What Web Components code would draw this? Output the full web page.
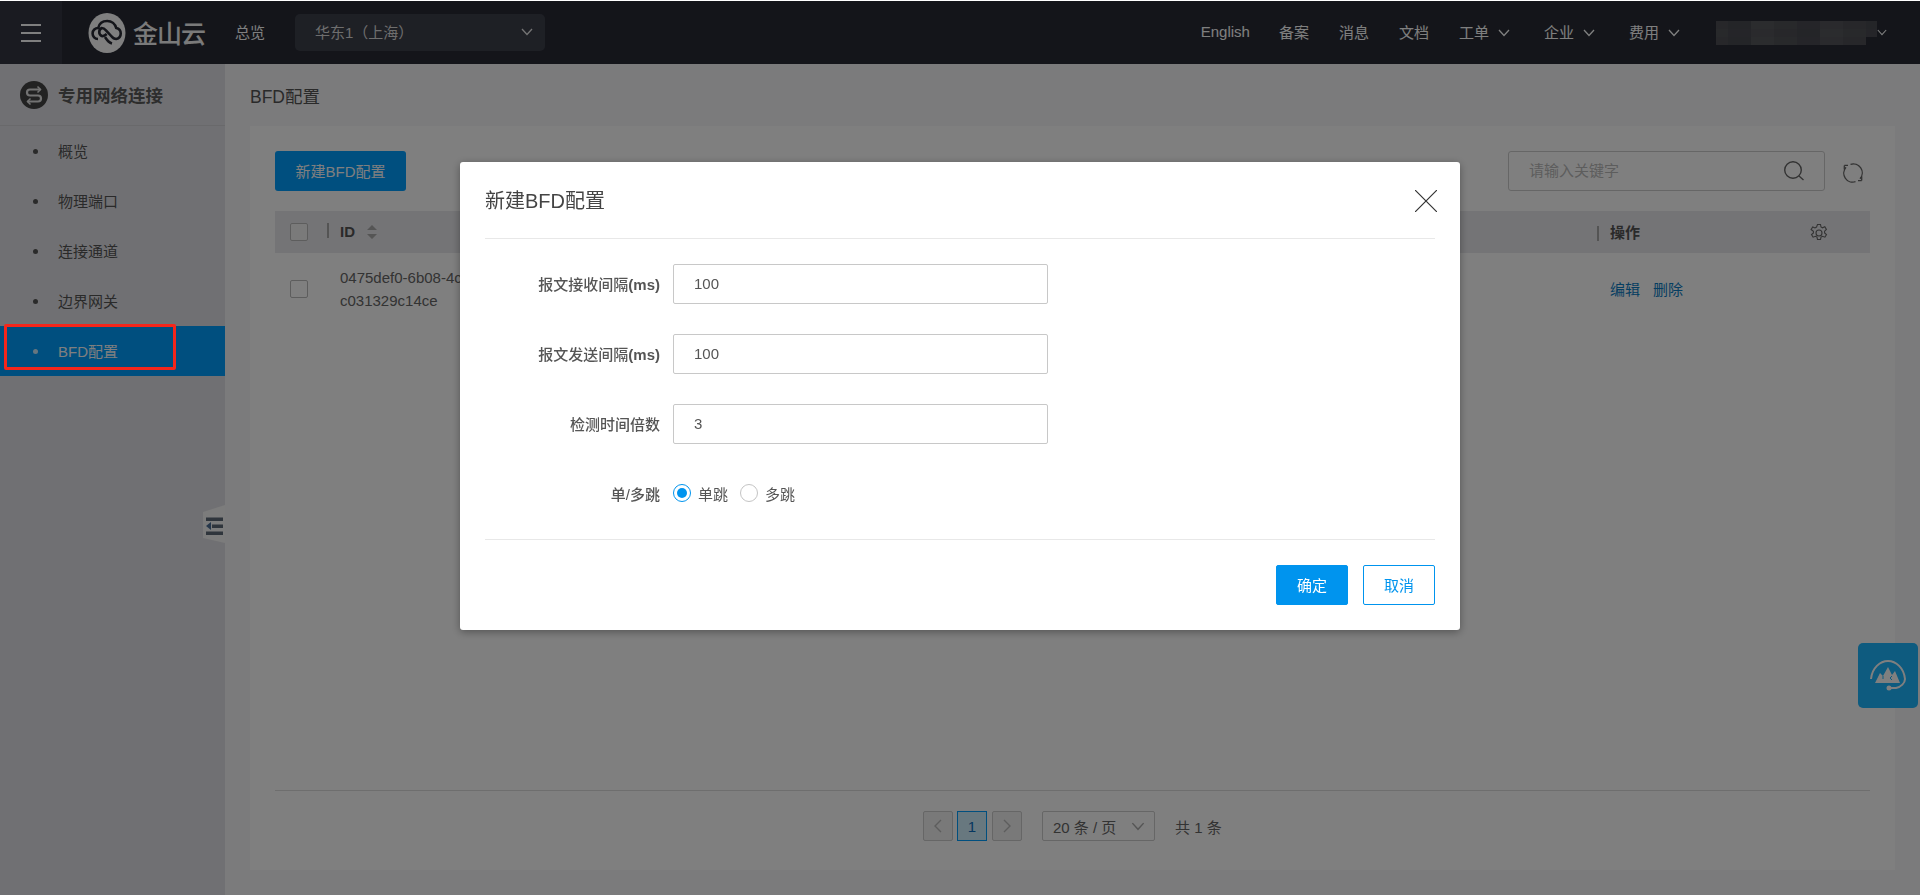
<!DOCTYPE html>
<html lang="zh-CN"><head><meta charset="utf-8"><title>BFD配置</title>
<style>
html,body{margin:0;height:100%;overflow:hidden}
body{padding-top:1px;box-sizing:border-box;background:#fff;font-family:"Liberation Sans","Noto Sans CJK SC",sans-serif;font-size:15px;color:#444}
</style></head><body>
<ks-shell>
  <ks-header slot="header"></ks-header>
  <ks-sidebar slot="side">
    <ks-nav>概览</ks-nav><ks-nav>物理端口</ks-nav><ks-nav>连接通道</ks-nav><ks-nav>边界网关</ks-nav><ks-nav active>BFD配置</ks-nav>
  </ks-sidebar>
  <ks-page slot="main"></ks-page>
</ks-shell>
<ks-support></ks-support>
<ks-overlay>
  <ks-modal heading="新建BFD配置">
    <ks-field label="报文接收间隔&lt;b&gt;(ms)&lt;/b&gt;" value="100"></ks-field>
    <ks-field label="报文发送间隔&lt;b&gt;(ms)&lt;/b&gt;" value="100"></ks-field>
    <ks-field label="检测时间倍数" value="3"></ks-field>
    <ks-radios label="单/多跳"></ks-radios>
  </ks-modal>
</ks-overlay>
<ks-mark></ks-mark>
<script>
const chev=(c,s=12)=>`<svg width="${s}" height="${Math.round(s*.6)+1}" viewBox="0 0 12 8" fill="none" stroke="${c}" stroke-width="1.3"><path d="M1 1l5 5.5L11 1"/></svg>`;
function def(name,html){
  customElements.define(name,class extends HTMLElement{
    constructor(){super();this.attachShadow({mode:'open'});}
    connectedCallback(){
      const a=k=>this.getAttribute(k)||'';
      this.shadowRoot.innerHTML=typeof html==='function'?html(a,this):html;
    }
  });
}
def('ks-shell',`<style>:host{display:flex;flex-direction:column;height:894px}
.row{display:flex;flex:1;min-height:0}</style>
<slot name="header"></slot><div class="row"><slot name="side"></slot><slot name="main"></slot></div>`);

let mosaic='';
const shades=['#4e4f55','#54555a','#4a4b52','#515257','#57585c','#484a50'];
for(let r=0;r<3;r++)for(let c=0;c<14;c++){
  if(r===2&&c>12)continue;
  const sh=shades[(c*5+r*3+(c>>1))%6];
  mosaic+=`<rect x="${c*11.5}" y="${r*8}" width="11.6" height="8.2" fill="${sh}"/>`;
}
def('ks-header',`<style>
:host{display:flex;align-items:center;height:63px;background:#282b35;color:#fff;font-size:15px;flex:none}
.burger{width:62px;height:63px;background:#343742;display:flex;flex-direction:column;gap:6px;align-items:center;justify-content:center}
.burger i{display:block;width:20px;height:2px;background:#fff}
.logo{margin-left:26px;display:flex;align-items:center;gap:7px;width:117px}
.logo b{font:500 25px/1 "Noto Sans CJK SC",sans-serif;letter-spacing:-1px;white-space:nowrap;color:#f4f4f4}
.ov{margin-left:30px;padding-bottom:2px}
.sel{margin-left:30px;width:250px;height:37px;box-sizing:border-box;padding:0 12px 0 20px;background:#3d404b;border-radius:5px;display:flex;align-items:center;justify-content:space-between;color:#dcdcdc;margin-top:-1px}
.sel span{padding-bottom:2px}
.r{margin-left:auto;display:flex;align-items:center;padding-right:33px}
.r span{white-space:nowrap;padding-bottom:3px}
.e{margin-right:29px}.n{margin-right:30px}.d{margin-left:9px;margin-right:34px;display:flex}
.blur{display:flex;align-items:center}
</style>
<div class="burger"><i></i><i></i><i></i></div>
<div class="logo"><svg width="38" height="40" viewBox="0 0 38 40"><ellipse cx="19" cy="20" rx="18.500" ry="20" fill="#fff"/><path d="M10 26a5.500 5.500 0 0 1 .2-11c1-4.500 4.500-7 9-7 4.600 0 8 3 9 7a5.600 5.600 0 0 1 0 11c-2 0-3.500-1-5-3l-5-5.500c-1.500-1.700-3-2.500-4.500-2.500a4.500 4.500 0 0 0 0 8c2 .5 3.500-.5 5-2" fill="none" stroke="#282b35" stroke-width="2.600"/><path d="M17 24c2 3 3.500 5.500 7 6.500" fill="none" stroke="#282b35" stroke-width="2.600"/></svg><b>金山云</b></div>
<span class="ov">总览</span>
<div class="sel"><span>华东1（上海）</span>${chev('#e8e8e8')}</div>
<div class="r"><span class="e">English</span><span class="n">备案</span><span class="n">消息</span><span class="n">文档</span><span>工单</span><div class="d">${chev('#fff')}</div><span>企业</span><div class="d">${chev('#fff')}</div><span>费用</span><div class="d" style="margin-right:36px">${chev('#fff')}</div>
<div class="blur"><svg width="161" height="24" viewBox="0 0 161 24" shape-rendering="crispEdges">${mosaic}</svg></div>
<div style="display:flex">${chev('#fff',10)}</div></div>`);

def('ks-sidebar',`<style>
:host{display:block;width:225px;flex:none;background:#e1e1e6;position:relative}
.h{height:61px;border-bottom:1px solid #d2d2d6;display:flex;align-items:center;padding-left:20px;gap:10px;font:700 17.500px "Noto Sans CJK SC",sans-serif;color:#5a5a5a}
.handle{position:absolute;left:203px;top:441px}
</style>
<div class="h"><svg width="28" height="28" viewBox="0 0 28 28"><circle cx="14" cy="14" r="14" fill="#444"/><path d="M20.500 8.500H10a3 3 0 0 0 0 6h8a3 3 0 0 1 0 6H7.500" fill="none" stroke="#e4e4e4" stroke-width="2.200"/><path d="M17.500 5.500l3 3-3 3M10.500 17.500l-3 3 3 3" fill="none" stroke="#e4e4e4" stroke-width="1.500"/></svg><span>专用网络连接</span></div>
<slot></slot>
<svg class="handle" width="22" height="38" viewBox="0 0 22 38"><path d="M0 7L22 0V38L0 33Z" fill="#f8f8f8"/><path d="M3 12.500h17v3.500H3zM9 19.500h11v3.500H9zM3 26.500h17v3.500H3z" fill="#5e6a78"/><path d="M8 17v8l-5-4z" fill="#4c6f96"/></svg>`);

def('ks-nav',(a,el)=>`<style>
:host{display:flex;align-items:center;height:50px;box-sizing:border-box;padding:0 0 0 33px;color:${el.hasAttribute('active')?'#fff':'#555'};background:${el.hasAttribute('active')?'#009eff':'none'};font-size:15px}
i{width:5px;height:5px;border-radius:50%;background:currentColor;margin-right:20px;opacity:${el.hasAttribute('active')?.8:1}}
span{padding-bottom:2px}
</style><i></i><span><slot></slot></span>`);

def('ks-page',`<style>
:host{flex:1;min-width:0;display:flex;flex-direction:column;background:#f6f6f8;padding:0 25px 25px}
.t{height:62px;display:flex;align-items:center;font-size:17.500px;color:#555;flex:none}
ks-card{flex:1;min-height:0}
</style><div class="t">BFD配置</div><ks-card></ks-card>`);

def('ks-card',`<style>
:host{display:flex;flex-direction:column;background:#fff;padding:25px 25px 0}
.bar{display:flex;align-items:center;height:40px;margin-bottom:20px}
.btn{width:131px;height:40px;background:#009eff;color:#fff;border-radius:3px;display:flex;align-items:center;justify-content:center;padding-bottom:2px;box-sizing:border-box}
.s{margin-left:auto;width:317px;height:40px;box-sizing:border-box;border:1px solid #ccc;border-radius:3px;display:flex;align-items:center;justify-content:space-between;padding:0 19px 0 20px;color:#bbb}
.s span{padding-bottom:4px}
.ref{margin:0 7px 0 18px;display:flex;padding-top:3px}
.th{display:flex;align-items:center;height:42px;background:#e8e8ec;font-weight:700;color:#555;position:relative;flex:none}
.th span{padding-bottom:2px}
.cb{width:18px;height:18px;box-sizing:border-box;border:1px solid #bbb;border-radius:2px;background:#fff;margin-left:15px;flex:none}
.th .cb{background:#f4f4f4}
.sep{width:2px;height:15px;background:#a8a8a8;margin-top:-3px}
.row{display:flex;flex:1;min-height:0;padding-top:13px}
.row .cb{margin-top:14px}
.id{margin-left:32px;line-height:23px;width:120px;color:#666;white-space:nowrap;flex:none}
.ops{margin-left:auto;width:260px;padding-top:12px;line-height:23px;color:#0b7dc4;display:flex;gap:13px;align-items:flex-start}
.pg{border-top:1px solid #ddd;height:80px;box-sizing:border-box;flex:none}
</style>
<div class="bar"><div class="btn">新建BFD配置</div>
<div class="s"><span>请输入关键字</span><svg width="22" height="22" viewBox="0 0 22 22" fill="none" stroke="#666" stroke-width="1.400"><circle cx="10" cy="10" r="8.300"/><path d="M16 16l4.500 4"/></svg></div>
<div class="ref"><svg width="20" height="20" viewBox="0 0 20 20" fill="none" stroke="#666" stroke-width="1.300"><path d="M7.500 1.300A9 9 0 0 1 17 15.800"/><path d="M18.700 17.600h-3.700M18.700 17.600v-4"/><path d="M12.500 18.700A9 9 0 0 1 3 4.200"/><path d="M1.300 2.400H5M1.300 2.400v4"/></svg></div></div>
<div class="th"><div class="cb"></div><div class="sep" style="margin-left:19px"></div><span style="margin-left:11px">ID</span>
<svg style="margin-left:12px" width="10" height="14" viewBox="0 0 10 14" fill="#aaa"><path d="M5 0l5 5H0zM5 14l5-5H0z"/></svg>
<div class="sep" style="position:absolute;left:1322px;top:15px;margin:0"></div><span style="position:absolute;left:1335px">操作</span>
<svg style="position:absolute;left:1534px;top:12px" width="20" height="20" viewBox="0 0 20 20" fill="none" stroke="#666" stroke-width="1.100"><circle cx="10" cy="10" r="3"/><path d="M8.500 1.500h3l.5 2.500 1.500.8 2.300-1 1.600 2.600-1.800 1.800v1.700l1.900 1.700-1.600 2.600-2.400-.9-1.500.8-.5 2.400h-3l-.5-2.400-1.500-.8-2.400.9-1.600-2.600 1.900-1.700V8.300L2.100 6.500l1.600-2.600 2.300 1 1.500-.8z"/></svg></div>
<div class="row"><div class="cb"></div><div class="id">0475def0-6b08-4c<br>c031329c14ce</div><div class="ops"><span>编辑</span><span>删除</span></div></div>
<div class="pg"><ks-pager></ks-pager></div>`);

def('ks-pager',`<style>
:host{display:flex;align-items:center;padding:20px 0 0 648px;color:#666;font-size:15px}
.b{width:30px;height:30px;box-sizing:border-box;border:1px solid #ccc;border-radius:2px;display:flex;align-items:center;justify-content:center;background:#f2f2f2}
.on{border-color:#009eff;color:#0b6fc0;background:#d0f0ff;margin:0 5px 0 4px;border-radius:0}
.sel{margin-left:20px;width:113px;height:30px;box-sizing:border-box;border:1px solid #ccc;border-radius:2px;display:flex;align-items:center;justify-content:space-between;padding:0 9px 0 10px}
.tot{margin-left:20px}
</style>
<div class="b"><svg width="10" height="16" viewBox="0 0 10 16" fill="none" stroke="#bbb" stroke-width="1.400"><path d="M8 2L2 8l6 6"/></svg></div><div class="b on">1</div><div class="b"><svg width="10" height="16" viewBox="0 0 10 16" fill="none" stroke="#bbb" stroke-width="1.400"><path d="M2 2l6 6-6 6"/></svg></div>
<div class="sel"><span>20 条 / 页</span>${chev('#aaa',14)}</div><span class="tot">共 1 条</span>`);

def('ks-support',`<style>
:host{position:fixed;left:1858px;top:643px;width:60px;height:65px;background:#1cb6ff;border-radius:5px;display:flex;align-items:center;justify-content:center}
</style><svg width="40" height="36" viewBox="0 0 40 36" fill="none"><path d="M3 21C4 10 12 3 20 3c8 0 16 7 17 18 0 4-4 8-9 9h-5" stroke="#fff" stroke-width="2"/><circle cx="21" cy="30" r="2.500" fill="#fff"/><path d="M7 25l5-10 3 3 5-9 4 8 3-4 5 12z" fill="#fff"/><path d="M15 18v3M24 18l-2 2 2 2" stroke="#1cb6ff" stroke-width="1"/></svg>`);

def('ks-overlay',`<style>
:host{position:fixed;left:0;top:1px;right:0;bottom:0;background:rgba(0,0,0,.5);display:flex;justify-content:center;align-items:flex-start;padding-top:161px;box-sizing:border-box}
</style><slot></slot>`);

def('ks-modal',a=>`<style>
:host{display:block;width:1000px;background:#fff;border-radius:3px;box-shadow:0 2px 8px rgba(0,0,0,.35);padding:0 25px;box-sizing:border-box}
.h{height:76px;border-bottom:1px solid #e8e8e8;display:flex;align-items:center;justify-content:space-between;font-size:20px;color:#444}
.h span{padding-bottom:1px}
.b{padding:25px 0;display:flex;flex-direction:column;gap:30px;border-bottom:1px solid #e8e8e8}
.f{display:flex;justify-content:flex-end;gap:15px;padding:25px 0}
.btn{width:72px;height:40px;box-sizing:border-box;border:1px solid #0094ee;border-radius:2px;display:flex;align-items:center;justify-content:center;font-size:15px;color:#0094ee;padding-bottom:2px}
.p{background:#0094ee;color:#fff}
svg{margin:2px -2px 0 0}
</style><div class="h"><span>${a('heading')}</span><svg width="22" height="22" viewBox="0 0 22 22" stroke="#333" stroke-width="1.200"><path d="M0 0l22 22M22 0L0 22"/></svg></div>
<div class="b"><slot></slot></div>
<div class="f"><div class="btn p">确定</div><div class="btn">取消</div></div>`);

def('ks-field',a=>`<style>
:host{display:flex;align-items:center;height:40px;font-size:15px}
.l{width:175px;text-align:right;padding:0 13px 2px 0;font-weight:500;color:#555;flex:none}
.i{width:375px;height:40px;box-sizing:border-box;border:1px solid #c8c8c8;border-radius:2px;padding:0 20px 2px;display:flex;align-items:center;color:#555}
</style><div class="l">${a('label')}</div><div class="i">${a('value')}</div>`);

def('ks-radios',a=>`<style>
:host{display:flex;align-items:center;height:40px;font-size:15px;color:#555}
.l{width:175px;text-align:right;padding:0 13px 2px 0;font-weight:500;flex:none}
.r{width:18px;height:18px;box-sizing:border-box;border:1px solid #c4c4c4;border-radius:50%;margin:0 7px 2px 0;position:relative}
.on{border-color:#0094ee}
.on:after{content:"";position:absolute;inset:3px;border-radius:50%;background:#0094ee}
.t{margin-right:12px}
span{padding-bottom:2px}
</style><div class="l">${a('label')}</div><div class="r on"></div><span class="t">单跳</span><div class="r"></div><span>多跳</span>`);

def('ks-mark',`<style>
:host{position:fixed;left:4px;top:324px;width:172px;height:46px;box-sizing:border-box;border:3px solid #f5261a;border-radius:2px}
</style>`);
</script>
</body></html>
